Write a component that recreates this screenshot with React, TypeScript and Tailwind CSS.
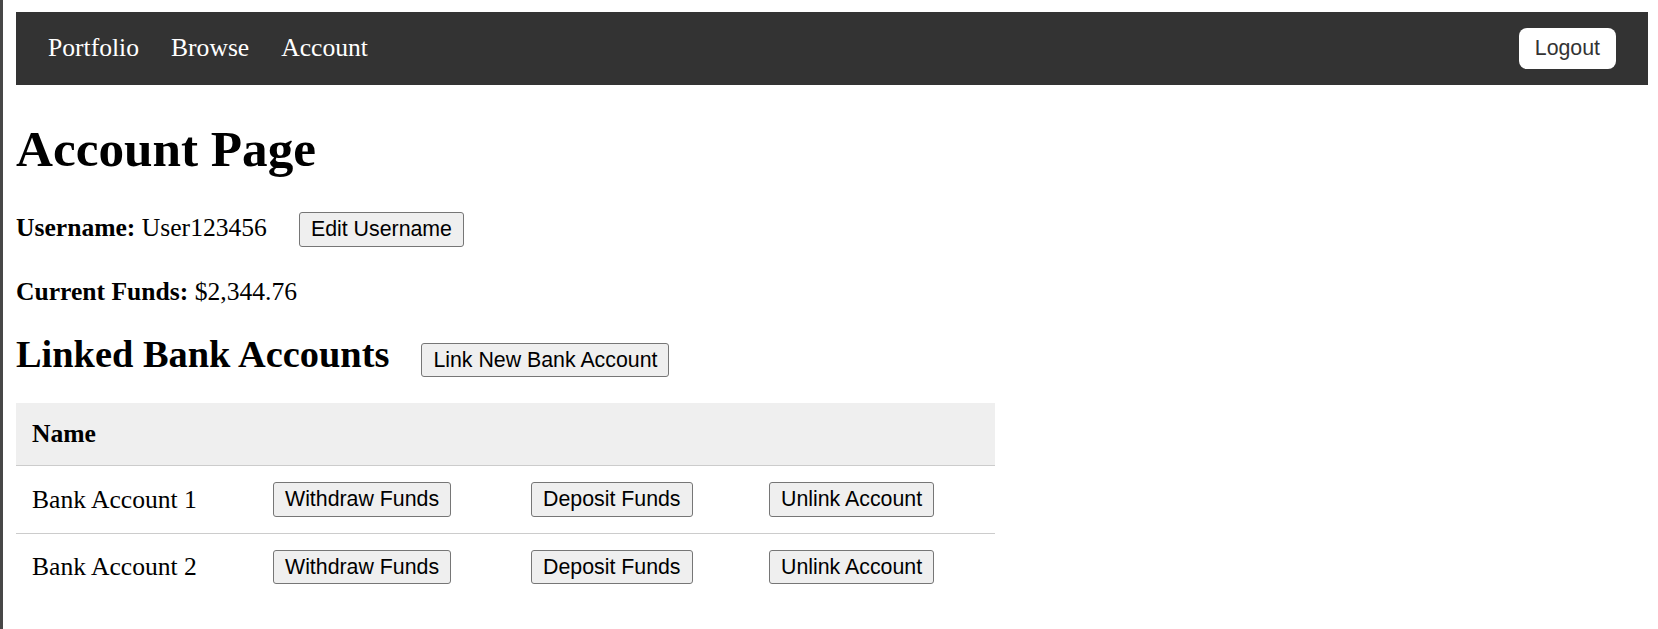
import React from 'react';

const btn =
  'h-[34.5px] px-[11px] bg-[#efefef] border border-[#767676] rounded-[3px] text-[21.33px] leading-none text-black font-["Liberation_Sans",Arial,sans-serif] whitespace-nowrap';

const accounts = ['Bank Account 1', 'Bank Account 2'];

function NavBar() {
  return (
    <nav className="h-[73px] bg-[#333333] flex items-center justify-between pl-[32px] pr-[32px]">
      <div className="flex items-center gap-[32px] text-white text-[25.6px]">
        <a href="#">Portfolio</a>
        <a href="#">Browse</a>
        <a href="#">Account</a>
      </div>
      <button className='h-[41px] px-[16px] bg-white rounded-[8px] text-[#333] text-[21.33px] leading-none font-["Liberation_Sans",Arial,sans-serif]'>
        Logout
      </button>
    </nav>
  );
}

function App() {
  return (
    <div className='flex min-h-[629px] bg-white text-black font-["Liberation_Serif","Times_New_Roman",serif]'>
      <div className="w-[3px] shrink-0 bg-[#474747]" />
      <div className="flex-1 pl-[13px] pr-[10px] pt-[12px]">
        <NavBar />

        <h1 className="mt-[34px] text-[51.2px] leading-[59px] font-bold">Account Page</h1>

        <div className="mt-[34px] flex items-baseline text-[25.6px] leading-[29px]">
          <span>
            <b>Username:</b> User123456
          </span>
          <button className={btn + ' ml-[32px]'}>Edit Username</button>
        </div>

        <p className="mt-[30px] text-[25.6px] leading-[29px]">
          <b>Current Funds:</b> $2,344.76
        </p>

        <div className="mt-[26px] flex items-baseline">
          <h2 className="text-[38.4px] leading-[44px] font-bold">Linked Bank Accounts</h2>
          <button className={btn + ' ml-[32px]'}>Link New Bank Account</button>
        </div>

        <table className="mt-[26px] w-[979px] table-fixed border-collapse text-[25.6px] leading-[30px]">
          <colgroup>
            <col className="w-[241px]" />
            <col className="w-[258px]" />
            <col className="w-[238px]" />
            <col className="w-[242px]" />
          </colgroup>
          <thead>
            <tr className="bg-[#efefef] border-b border-[#cccccc]">
              <th className="text-left font-bold px-[16px] py-[16px]">Name</th>
              <th />
              <th />
              <th />
            </tr>
          </thead>
          <tbody>
            {accounts.map((name, i) => (
              <tr key={name} className={i < accounts.length - 1 ? 'border-b border-[#cccccc]' : ''}>
                <td className="px-[16px] py-[16px] whitespace-nowrap">{name}</td>
                <td className="px-[16px] py-[16px]">
                  <button className={btn}>Withdraw Funds</button>
                </td>
                <td className="px-[16px] py-[16px]">
                  <button className={btn}>Deposit Funds</button>
                </td>
                <td className="px-[16px] py-[16px]">
                  <button className={btn}>Unlink Account</button>
                </td>
              </tr>
            ))}
          </tbody>
        </table>
      </div>
    </div>
  );
}

export default App;
